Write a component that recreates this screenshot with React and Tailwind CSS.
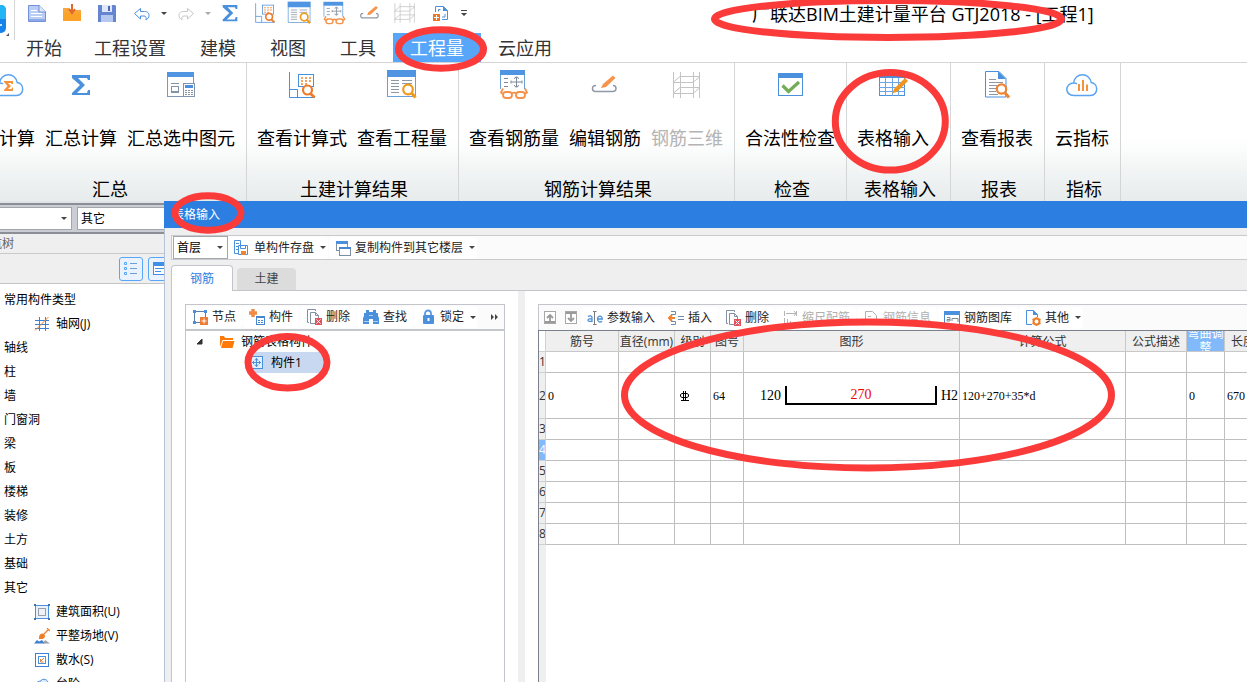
import React from "react";

const BLUE = "#4a90dc";
const ORANGE = "#f08230";

function Svg({ size = 32, box = 32, children }) {
  return (
    <svg width={size} height={size} viewBox={`0 0 ${box} ${box}`} fill="none" className="shrink-0" aria-hidden="true">
      {children}
    </svg>
  );
}

/* ---------- ribbon icons, 32 unit grid ---------- */

const SigmaIcon = ({ size }) => (
  <Svg size={size}>
    <path d="M7 6h18v5h-2l-1-2H13l7 7-8 8h10l1-3h2v5H7v-2l8-8-8-7z" fill={BLUE} />
  </Svg>
);

const CLOUD = "M8 26.500C3 26.500 .8 23.500.8 20.300S3.500 14 7.500 14C8 9 12 5.800 16.500 5.800S24.500 9 25.200 13.500C28.500 14 30.700 16.800 30.700 20S28.500 26.500 24.500 26.500zM7.500 14C9 13.800 10 14.200 11 15M11 11.200";

const CloudSigmaIcon = () => (
  <Svg>
    <path d={CLOUD} stroke="#5aa3f0" strokeWidth="1.500" />
    <path d="M12 12h9v3h-1.500l-.5-1h-3l3 3-3 3h3.500l.5-1.500H21V22h-9v-1l3.500-4L12 13z" fill="#f5923e" />
  </Svg>
);

const CloudChartIcon = () => (
  <Svg>
    <path d={CLOUD} stroke="#5aa3f0" strokeWidth="1.500" />
    <path d="M13 15v7M17 11v11M21 15.500V22" stroke="#f5923e" strokeWidth="2" />
  </Svg>
);

const SelectedIcon = () => (
  <Svg>
    <rect x="2.500" y="3.500" width="26" height="24" stroke="#7f97b4" fill="#fff" />
    <rect x="2" y="3" width="27" height="5" fill="#4f95e2" />
    <path d="M6 14.500h8M6 23.500h8" stroke="#8494a8" />
    <rect x="6.500" y="17.500" width="7" height="5" stroke="#8494a8" />
    <rect x="18.500" y="14.500" width="11" height="13" stroke="#8494a8" fill="#fff" />
    <rect x="20" y="16" width="8" height="3" fill={BLUE} />
    <path d="M20 21.500h8M20 23.500h8M20 25.500h8" stroke="#8494a8" strokeDasharray="2 1" />
  </Svg>
);

const FormulaIcon = ({ size }) => (
  <Svg size={size}>
    <path d="M3.500 3v25.500H29M3.500 20.500h8v8" stroke={BLUE} />
    <rect x="12.500" y="5.500" width="15" height="12" stroke={BLUE} fill="#fff" />
    <path d="M15 9h10M15 12h10M15 15h6" stroke={ORANGE} strokeWidth="1.500" strokeDasharray="2 2" />
    <circle cx="21.500" cy="21" r="4.500" stroke="#ee7b2b" strokeWidth="2.200" fill="#fff" />
    <path d="M24.500 24.500l4 4" stroke="#ee7b2b" strokeWidth="2.800" />
  </Svg>
);

const QuantityIcon = ({ size }) => (
  <Svg size={size}>
    <rect x="1.500" y="1.500" width="28" height="26" stroke="#6b9fd8" fill="#fff" />
    <rect x="1" y="1" width="29" height="7" fill="#4f95e2" />
    <path d="M5 11.500h8M5 14.500h8M5 17.500h8M5 20.500h8M5 23.500h8M16 11.500h10M16 14.500h10" stroke="#8d98a6" />
    <circle cx="22" cy="20.500" r="4.800" stroke="#f09a1c" strokeWidth="2.200" fill="#fff" />
    <path d="M25.500 24l4 4.500" stroke="#f09a1c" strokeWidth="3" />
  </Svg>
);

const GlassesIcon = ({ size }) => (
  <Svg size={size}>
    <path d="M2.500 20V2h24v18" stroke="#6b9fd8" fill="#fff" />
    <rect x="2" y="1" width="25" height="5" fill="#4f95e2" />
    <path d="M6 9.500h4M6 13.500h4M6 17.500h4M18.500 8v10M13 13h11M13 11.500v3M24 11.500v3M16.500 10a2 2 0 014 0M16.500 16a2 2 0 004 0" stroke="#7c8a99" />
    <g stroke="#f5924a" strokeWidth="1.800" fill="#fff">
      <rect x="5" y="23" width="9" height="6" rx="3" />
      <rect x="18" y="23" width="9" height="6" rx="3" />
      <path d="M14 24.500c1-1 3-1 4 0M5 25l-2-1.500 2-4M27 25l2-1.500-2-4" fill="none" />
    </g>
  </Svg>
);

const PenIcon = ({ size }) => (
  <Svg size={size}>
    <path d="M7 16.500C4.500 16.500 3.500 18 3.500 19.500s1 3 3 3h17c2 0 3.500-1 3.500-3s-1-3-3-3" stroke="#8f9aa6" strokeWidth="1.500" />
    <path d="M12 19l2-4L24 6.500l2.500 2.500L17 18z" fill="#f5944a" />
  </Svg>
);

const Grid3dIcon = ({ size }) => (
  <Svg size={size}>
    <path d="M2.500 3v26M9.500 3v26M22.500 3v26M28.500 3v26M2 13.500h20M2 24.500h20M9 7.500h20M9 18.500h20M2 13.500l7-6M22 13.500l7-6M2 24.500l7-6M22 24.500l7-6" stroke="#c4c4c4" />
  </Svg>
);

const CheckIcon = () => (
  <Svg>
    <rect x="4.500" y="4.500" width="24" height="22" stroke={BLUE} fill="#fff" />
    <rect x="4" y="4" width="25" height="5" fill={BLUE} />
    <path d="M8.500 16.500l6 6 10.500-9.500" stroke="#74ad58" strokeWidth="3.200" />
  </Svg>
);

const TableInputIcon = () => (
  <Svg>
    <rect x="2.500" y="5.500" width="25" height="21" stroke={BLUE} />
    <path d="M2 6h26v3H2z" fill={BLUE} />
    <path d="M2 13.500h26M2 18.500h26M2 22.500h26M8.500 9v18M15.500 9v18M21.500 9v18" stroke="#6aa5e8" />
    <path d="M15 24.500l2.500-5L28 9l3 3-10.500 10.500z" fill="#f0961f" />
  </Svg>
);

const ReportIcon = () => (
  <Svg>
    <path d="M4.500 2.500H18l7 7v18.500H4.500z" stroke={BLUE} fill="#fff" />
    <path d="M17 2l8 8h-8z" fill={BLUE} />
    <path d="M8 10.500h7M8 13.500h14M8 16.500h8M8 19.500h7M8 22.500h7M8 25.500h9" stroke="#8d98a6" />
    <circle cx="20.500" cy="20" r="4.700" stroke={ORANGE} strokeWidth="2.200" fill="#fff" />
    <path d="M24 24l4 4.500" stroke={ORANGE} strokeWidth="3" />
  </Svg>
);

/* ---------- quick access icons, 24 unit grid ---------- */

const NewDoc = () => (
  <Svg size={24} box={24}>
    <path d="M3.500 4.500h11l6 6v10h-17z" fill="#b9cdf5" stroke="#7391d8" />
    <path d="M14 4v7h7" fill="#dfe8fb" stroke="#7391d8" />
    <path d="M6 9.500h6M6 12.500h11M6 15.500h11" stroke="#fff" />
    <path d="M4 18h16v2H4z" fill="#8fa9e8" />
  </Svg>
);
const OpenDoc = () => (
  <Svg size={24} box={24}>
    <path d="M3 7h6l2 2h10v11H3z" fill="#f9a63a" />
    <path d="M3 12h18v8H3z" fill="#fba228" />
    <path d="M12 3v7M9 8l3 4 3-4" stroke="#e2682a" strokeWidth="2" />
  </Svg>
);
const SaveDoc = () => (
  <Svg size={24} box={24}>
    <path d="M3 4h17l1 1v16H3z" fill="#6585d0" />
    <rect x="7" y="4" width="10" height="7" fill="#dfe7f8" />
    <rect x="13" y="5" width="2" height="5" fill="#4b69b5" />
    <rect x="6" y="14" width="12" height="7" fill="#b7c8f0" />
  </Svg>
);
const Arrow = ({ color, flip }) => (
  <Svg size={24} box={24}>
    <g transform={flip ? "translate(24 0) scale(-1 1)" : undefined}>
      <path d="M4.500 12.500l6-5v3h4c3.500 0 4.500 2 4.500 4s-1 3-3 4.500c.5-2.500 0-4-2-4h-3.500v3z" stroke={color} fill="#fff" />
    </g>
  </Svg>
);
const NewPage = () => (
  <Svg size={24} box={24}>
    <path d="M7.500 11V5.500h8l4 4v9H14" stroke={BLUE} />
    <path d="M15 5v5h5z" fill={BLUE} />
    <path d="M10.500 10.500v-2h2M17 13v3h-3" stroke={BLUE} />
    <rect x="5" y="13" width="7" height="7" fill="#ee7528" />
    <path d="M8.500 14v5M6 16.500h5" stroke="#fff" />
  </Svg>
);
const Caret = ({ color = "#444", bar }) => (
  <svg width="6" height={bar ? 7 : 3} viewBox={bar ? "0 0 6 7" : "0 0 6 3"} className="shrink-0" aria-hidden="true">
    {bar ? <path d="M0 0h6v1H0zM0 3h6L3 6z" fill={color} /> : <path d="M0 0h6L3 3z" fill={color} />}
  </svg>
);

/* ---------- small icons, 16 unit grid ---------- */

const S = ({ children }) => <Svg size={16} box={16}>{children}</Svg>;

const NodeIcon = () => (
  <S>
    <path d="M2.500 2.500h11v11h-11z" stroke="#5c7fa8" />
    <path d="M1 1h3v3H1zM12 1h3v3h-3zM1 12h3v3H1z" fill={BLUE} />
    <rect x="8" y="8" width="8" height="8" fill="#ee7b35" />
    <path d="M12 9.500v5M9.500 12h5" stroke="#fff" />
  </S>
);
const PartIcon = () => (
  <S>
    <path d="M4 0v8M0 4h8" stroke="#f08b45" strokeWidth="3.500" />
    <rect x="7.500" y="7.500" width="8" height="8" stroke="#4787d0" fill="#fff" />
    <path d="M7 7h9v2H7z" fill="#4787d0" />
    <path d="M9 11.500h5M9 13.500h5" stroke="#4787d0" strokeDasharray="2 1" />
  </S>
);
const DeleteIcon = () => (
  <S>
    <path d="M3 13.500H1.500V.5h8V2" stroke="#8191a2" />
    <path d="M9 14.500H4.500v-11h5l3 3V9M9.500 3.500v3h3" stroke="#8191a2" />
    <rect x="9" y="9" width="7" height="7" fill="#e0525c" />
    <path d="M10.500 10.500l4 4M14.500 10.500l-4 4" stroke="#fff" />
  </S>
);
const FindIcon = () => (
  <S>
    <path d="M3 1h3v2h4V1h3v3h2v3l1 2v6h-6v-5H6v5H0V9l1-2V4h2z" fill="#4a90dc" />
    <path d="M1 12.500h5M10 12.500h5M6 6.500h4" stroke="#a9cdf5" />
  </S>
);
const LockIcon = () => (
  <S>
    <path d="M5 7V4.500a3 3 0 016 0V7" stroke="#5b9ae0" strokeWidth="1.800" />
    <rect x="3" y="6" width="11" height="9" rx="1" fill="#4a90dc" />
    <path d="M8.500 9v3" stroke="#fff" strokeWidth="2" />
  </S>
);
const ParamIcon = () => (
  <S>
    <path d="M1 6.500c1.500-1.200 4-.8 4 1V12M5 9C3 8.500 1 9 1 10.300S4 12 5 10.500M10.500 9h4.800c0-3.800-4.800-3.800-4.800 0s3.200 3.300 4.600 2.200" stroke={BLUE} strokeWidth="1.300" />
    <path d="M6 1.500h1.500v13H6M9.500 1.500H7.500M9.500 14.500H7.500" stroke="#777" />
  </S>
);
const InsertIcon = () => (
  <S>
    <path d="M3 1.500h4.500v3H3M3 11.500h4.500v3H3M10 6.500h6M10 9.500h6" stroke="#6e8cb0" />
    <path d="M7 8H1M4 5L1 8l3 3" stroke={ORANGE} strokeWidth="2" />
  </S>
);
const MoveIcon = ({ down }) => (
  <S>
    <rect x="2.500" y="1.500" width="11" height="12" stroke="#a8a8a8" fill="#fff" />
    <path d={down ? "M8 4v7M5 8l3 3 3-3M3 3h10" : "M8 11V5M5 8l3-3 3 3M3 12h10"} stroke="#9a9a9a" strokeWidth="1.800" />
  </S>
);
const ScaleIcon = () => (
  <S>
    <path d="M2.500 1v5M4 3.500h10M12 1l2 2.500L12 6M14.500 1v5M2.500 8v6M5.500 9v5M8.500 11v3M11.500 12v2" stroke="#b5b5b5" />
  </S>
);
const InfoIcon = () => (
  <S>
    <path d="M2.500 1.500h7l4 4v9h-11z" stroke="#b0b0b0" />
    <path d="M5 6.500h3M5 9.500h6M5 11.500h6" stroke="#b0b0b0" />
  </S>
);
const LibraryIcon = () => (
  <S>
    <rect x=".5" y="1.500" width="15" height="13" stroke="#4787d0" fill="#fff" />
    <path d="M0 1h16v4H0z" fill="#4a90dc" />
    <path d="M3 7.500h3V11H3V9.500h3M8 11V8.500h6V12" stroke="#7c8a99" />
  </S>
);
const OtherIcon = () => (
  <S>
    <path d="M7 14.500H1.500V.5h7l4 4V7" stroke={BLUE} />
    <path d="M8 0v5h5z" fill={BLUE} />
    <circle cx="11.500" cy="11.500" r="3" stroke="#ef7d28" strokeWidth="2" />
    <path d="M11.500 7v2M11.500 14v2M7.500 9.200l2 1M13.500 12.800l2 1M7.500 13.800l2-1M13.500 10.200l2-1" stroke="#ef7d28" strokeWidth="1.500" />
  </S>
);
const StoreIcon = () => (
  <S>
    <path d="M4 13.500H.5V.5h6V5M2 3.500h3M2 6.500h2M2 9.500h2" stroke={BLUE} />
    <path d="M4.500 5.500h9v9h-9z" stroke={BLUE} fill="#fff" />
    <path d="M6.500 5.500h5v3h-5z" stroke={BLUE} />
    <path d="M7 11h5v4H7z" fill={ORANGE} />
  </S>
);
const CopyIcon = () => (
  <S>
    <rect x="1.500" y="1.500" width="11" height="9" stroke="#7d90a8" fill="#fff" />
    <path d="M1 1h12v3H1z" fill="#4a90dc" />
    <rect x="4.500" y="7.500" width="11" height="8" stroke="#7d90a8" fill="#fff" />
    <path d="M4 7h12v2H4z" fill="#4787d0" />
  </S>
);
const AxisIcon = () => (
  <S>
    <path d="M5.500 1v14M11.500 1v14M1 4.500h14M1 8.500h14M1 12.500h14" stroke="#3f7fd0" />
    <path d="M1 14.500L14.500 1" stroke={ORANGE} />
  </S>
);
const AreaIcon = () => (
  <S>
    <path d="M1.500 1.500h13v13h-13z" stroke="#4a90dc" fill="#e9f1fb" />
    <path d="M0 0h2v2H0zM14 0h2v2h-2zM0 14h2v2H0zM14 14h2v2h-2z" fill="#3d72b5" />
    <rect x="4.500" y="4.500" width="7" height="7" stroke="#9a9fa6" fill="#eef2f8" />
  </S>
);
const GroundIcon = () => (
  <S>
    <path d="M0 15.500l3-3.500 2 1.500 3-1.500 3 3.500z" fill="#3f7fd0" />
    <path d="M9 15.500l2-3.500 5 3.500z" fill="#9ba0a6" />
    <path d="M9 7l5.500-5.500M13 0l3 3" stroke="#ef7d28" strokeWidth="1.200" />
    <path d="M5 10c0-3 1-4.500 4-4.500l2 2c0 3-2 4-6 3.500z" fill="#ef7d28" />
  </S>
);
const WaterIcon = () => (
  <S>
    <rect x="1.500" y="1.500" width="13" height="13" stroke="#3f7fd0" />
    <rect x="4.500" y="4.500" width="7" height="7" stroke="#4a90dc" />
    <path d="M10 6L6.500 9.500M6.500 7v3h3" stroke={ORANGE} />
  </S>
);
const StepIcon = () => (
  <S>
    <path d="M1 9c1-3 4-4 6-4 0-2 5-3 7 1l-2 6H3z" stroke="#4a90dc" fill="#dfecfb" />
  </S>
);
const FolderIcon = () => (
  <S>
    <path d="M1 2h4l1 2h8v2H3.500L1 13z" fill="#ff7a08" />
    <path d="M4 7h11.500l-2 7H2z" fill="#ff7a08" />
  </S>
);
const ElementIcon = () => (
  <S>
    <rect x="1.500" y="1.500" width="12" height="12" stroke="#4a90dc" fill="#e2eefb" />
    <path d="M7.500 3v9M3 7.500h9M4.500 6v3M10.500 6v3M6 5.500a1.500 1.500 0 013 0M6 9.500a1.500 1.500 0 003 0" stroke="#4a90dc" />
  </S>
);

/* ---------- data ---------- */

const tabs = ["开始", "工程设置", "建模", "视图", "工具", "工程量", "云应用"];

const groups = [
  { name: "汇总", cls: "-ml-[29px]", items: [["云计算", CloudSigmaIcon], ["汇总计算", SigmaIcon], ["汇总选中图元", SelectedIcon]] },
  { name: "土建计算结果", items: [["查看计算式", FormulaIcon], ["查看工程量", QuantityIcon]] },
  { name: "钢筋计算结果", items: [["查看钢筋量", GlassesIcon], ["编辑钢筋", PenIcon], ["钢筋三维", Grid3dIcon, true]] },
  { name: "检查", items: [["合法性检查", CheckIcon]] },
  { name: "表格输入", items: [["表格输入", TableInputIcon]] },
  { name: "报表", items: [["查看报表", ReportIcon]] },
  { name: "指标", items: [["云指标", CloudChartIcon]] },
];

const navTree = [
  ["常用构件类型"], ["轴网(J)", AxisIcon], ["轴线"], ["柱"], ["墙"], ["门窗洞"], ["梁"], ["板"], ["楼梯"], ["装修"],
  ["土方"], ["基础"], ["其它"], ["建筑面积(U)", AreaIcon], ["平整场地(V)", GroundIcon], ["散水(S)", WaterIcon], ["台阶", StepIcon],
];

const columns = ["筋号", "直径(mm)", "级别", "图号", "图形", "计算公式", "公式描述", "弯曲调整", "长度"];

/* ---------- parts ---------- */

function QuickButton({ label, children }) {
  return (
    <button type="button" aria-label={label} className="flex h-[26px] w-[35px] items-center justify-center">
      {children}
    </button>
  );
}

function CaretButton({ label, color }) {
  return (
    <button type="button" aria-label={label} className="flex h-[26px] w-[9px] items-center justify-center">
      <Caret color={color} />
    </button>
  );
}

function ToolButton({ icon: Icon, text, disabled, caret }) {
  return (
    <button
      type="button"
      disabled={disabled}
      className={
        "mr-px flex h-[22px] shrink-0 items-center gap-1 rounded-sm bg-white pl-[6px] text-[#222] disabled:text-[#b0b0b0] " +
        (caret ? "pr-[2px]" : "pr-[6px]")
      }
    >
      <Icon />
      <span className="whitespace-nowrap">{text}</span>
      {caret && <span className="pl-[2px]"><Caret /></span>}
    </button>
  );
}

function Combo({ label, value, className }) {
  return (
    <label className={"relative flex shrink-0 items-center border border-[#a3a6ab] bg-white " + className}>
      <span className="sr-only">{label}</span>
      <select defaultValue={value} className="h-full w-full appearance-none pl-[3px] text-[12px] text-black outline-none">
        <option value={value}>{value}</option>
      </select>
      <span className="pointer-events-none absolute right-1"><Caret /></span>
    </label>
  );
}

function Header() {
  return (
    <header className="flex border-b border-[#d4d4d4] bg-white">
      <div className="flex h-10 w-[15px] shrink-0 items-end overflow-hidden border-r border-[#d5d5d5]">
        <svg width="14" height="40" viewBox="0 0 14 40" aria-hidden="true">
          <rect x="-22" y="5" width="28" height="28" rx="5" fill="#1583ea" />
          <path d="M-5 5h6a5 5 0 015 5v9H-5z" fill="#22b4f4" />
          <path d="M0 24h2v2H0z" fill="#bfe6fc" />
          <path d="M9 33v3H6z" fill="#555" />
        </svg>
      </div>
      <div className="min-w-0 flex-1">
        <div className="flex h-[33px] items-start overflow-hidden whitespace-nowrap pl-1">
          <QuickButton label="新建"><NewDoc /></QuickButton>
          <QuickButton label="打开"><OpenDoc /></QuickButton>
          <QuickButton label="保存"><SaveDoc /></QuickButton>
          <QuickButton label="撤销"><Arrow color="#4a90dc" /></QuickButton>
          <CaretButton label="撤销列表" />
          <QuickButton label="恢复"><Arrow color="#c6c6c6" flip /></QuickButton>
          <CaretButton label="恢复列表" color="#aaa" />
          <QuickButton label="汇总计算"><SigmaIcon size={26} /></QuickButton>
          <QuickButton label="查看计算式"><FormulaIcon size={24} /></QuickButton>
          <QuickButton label="查看工程量"><QuantityIcon size={25} /></QuickButton>
          <QuickButton label="查看钢筋量"><GlassesIcon size={25} /></QuickButton>
          <QuickButton label="编辑钢筋"><PenIcon size={24} /></QuickButton>
          <QuickButton label="钢筋三维"><Grid3dIcon size={24} /></QuickButton>
          <QuickButton label="新建构件"><NewPage /></QuickButton>
          <button type="button" aria-label="自定义" className="flex h-[26px] w-[14px] items-center justify-center"><Caret bar /></button>
          <h1 className="ml-[281px] text-[18px] leading-7 text-black">广联达BIM土建计量平台 GTJ2018 - [工程1]</h1>
        </div>
        <nav className="flex overflow-hidden">
          {tabs.map((t) => (
            <button
              key={t}
              type="button"
              className={
                "h-[29px] shrink-0 px-[17px] text-[18px] leading-[31px] first:pl-[11px] first:pr-[15px] " +
                (t === "工程量" ? "bg-[#58a6fa] text-white" : "text-[#333]")
              }
            >
              {t}
            </button>
          ))}
        </nav>
      </div>
    </header>
  );
}

function Ribbon() {
  return (
    <div className="flex h-[138px] shrink-0 overflow-hidden bg-linear-to-b from-white from-55% to-[#e6ebeb]">
      {groups.map((g) => (
        <section key={g.name} className={"flex shrink-0 flex-col justify-between border-r border-[#d3d5d6] pt-[6px] " + (g.cls || "")}>
          <div className="flex pl-[5px] pr-[6px]">
            {g.items.map(([text, Icon, disabled]) => (
              <button
                key={text}
                type="button"
                disabled={disabled}
                className="flex flex-col items-center gap-[25px] px-[5px] text-[18px] leading-6 text-black disabled:text-[#b4b4b4]"
              >
                <Icon />
                <span>{text}</span>
              </button>
            ))}
          </div>
          <h2 className="pl-[17px] pr-[14px] text-center text-[18px] leading-6 text-black">{g.name}</h2>
        </section>
      ))}
    </div>
  );
}

function Sidebar() {
  return (
    <aside className="flex w-[164px] shrink-0 flex-col overflow-hidden bg-white text-[12px] text-black">
      <div className="h-[2px] shrink-0 bg-[#e1e4e8]" />
      <div className="flex h-[31px] shrink-0 items-center gap-[5px] border-y-2 border-[#8b8e95] bg-[#cacdd4]">
        <Combo label="楼层" value="" className="h-[23px] w-[72px] border-l-0" />
        <Combo label="构件类型" value="其它" className="h-[23px] w-[120px]" />
      </div>
      <div className="h-5 shrink-0 border-b border-[#c9c9c9] bg-[#efefef]">
        <h2 className="-ml-[10px] leading-[19px] text-[#666]">航树</h2>
      </div>
      <div className="flex h-[30px] shrink-0 items-center gap-[5px] border-b border-[#c4c4c4] bg-[#efefef] pl-[119px]">
        <button type="button" aria-label="列表" className="flex size-6 shrink-0 items-center justify-center rounded-[3px] border border-[#58a6f8] bg-[#eaf3fd]">
          <S><path d="M1.500 1.500h2v2h-2zM1.500 6.500h2v2h-2zM1.500 11.500h2v2h-2z" stroke="#58a6f8" /><path d="M7 2.500h7M7 7.500h7M7 12.500h7" stroke="#6d9fd6" /></S>
        </button>
        <button type="button" aria-label="面板" className="flex size-6 shrink-0 items-center justify-center rounded-[3px] border border-[#58a6f8] bg-[#eaf3fd]">
          <S><rect x="1.500" y="1.500" width="14" height="12" stroke="#3f8fe8" fill="#fff" /><path d="M1 1h15v4H1z" fill="#3f8fe8" /><path d="M3 7.500h9M3 10.500h6" stroke="#3f8fe8" /></S>
        </button>
      </div>
      <ul className="pt-1">
        {navTree.map(([text, Icon]) => (
          <li key={text} className={"flex h-6 items-center gap-[6px] whitespace-nowrap " + (Icon ? "pl-[34px]" : "pl-1")}>
            {Icon && <Icon />}
            <span>{text}</span>
          </li>
        ))}
      </ul>
    </aside>
  );
}

function Shape() {
  return (
    <div className="flex items-center gap-1 pl-[14px] text-[14px]">
      <span>120</span>
      <span className="flex h-[19px] w-[152px] items-center justify-center border-2 border-t-0 border-black text-[#f00000]">270</span>
      <span>H2</span>
    </div>
  );
}

function Rebar() {
  return (
    <svg width="10" height="10" viewBox="0 0 10 10" className="ml-[3px]" fill="none" stroke="#000" role="img" aria-label="钢筋级别">
      <path d="M3.500 0v9M5.500 0v9M2 2.500h5l1.500 1v2l-1.500 1H2l-1.500-1v-2zM1 9.500h8" />
    </svg>
  );
}

function GridTable() {
  const cell = "border-r border-b border-[#bfbfbf] p-0 pl-[2px] text-left font-normal";
  const row2 = ["0", "", <Rebar />, "64", <Shape />, "120+270+35*d", "", "0", "670"];
  return (
    <div className="flex-1 overflow-hidden border-l border-t border-[#7b818c] bg-linear-to-r from-[#efefef] from-[7px] to-white to-[7px]">
      <table className="w-[746px] table-fixed border-separate border-spacing-0 bg-white text-[12px]">
        <colgroup>
          <col className="w-[7px]" />
          <col className="w-[73px]" />
          <col className="w-[56px]" />
          <col className="w-[36px]" />
          <col className="w-[33px]" />
          <col className="w-[216px]" />
          <col className="w-[166px]" />
          <col className="w-[61px]" />
          <col className="w-[38px]" />
          <col className="w-[60px]" />
        </colgroup>
        <thead>
          <tr>
            <td className="h-[21px] border-r border-b border-[#d0d0d0] bg-white p-0" />
            {columns.map((c) => (
              <th
                key={c}
                scope="col"
                className={"h-[21px] border-r border-b border-[#c8c8c8] p-0 font-normal " + (c === "弯曲调整" ? "bg-[#82b9fa] text-white" : "bg-[#efefef] text-[#333]")}
              >
                {c === "弯曲调整" ? (
                  <div className="flex h-5 items-center overflow-hidden leading-[14px]">{c}</div>
                ) : (
                  <div className={"h-5 leading-[21px] whitespace-nowrap " + (c === "长度" ? "pl-[6px] text-left" : "")}>{c}</div>
                )}
              </th>
            ))}
          </tr>
        </thead>
        <tbody>
          {[1, 2, 3, 4, 5, 6, 7, 8].map((n) => (
            <tr key={n} className={n === 2 ? "h-[46px]" : "h-[21px]"}>
              <th
                scope="row"
                className={"overflow-hidden border-r border-b border-[#d0d0d0] p-0 text-left font-normal leading-5 " + (n === 4 ? "bg-[#82b9fa] text-white" : "bg-[#efefef] text-[#333]")}
              >
                {n}
              </th>
              {columns.map((c, i) => (
                <td key={c} className={cell + " font-['Liberation_Serif','Noto_Sans_CJK_SC',serif]"}>
                  {n === 2 ? row2[i] : null}
                </td>
              ))}
            </tr>
          ))}
        </tbody>
      </table>
    </div>
  );
}

function Dialog() {
  return (
    <section className="flex min-w-0 flex-1 flex-col border-l border-[#b6c3d8] bg-[#efefef] text-[12px]">
      <h2 className="-ml-px h-[27px] shrink-0 bg-[#2c7ee0] pl-2 leading-7 text-white">表格输入</h2>
      <div className="ml-[6px] mt-[7px] flex h-[25px] shrink-0 items-center border border-r-0 border-[#c8cace] bg-[#fbfbfb] pl-px">
        <Combo label="楼层" value="首层" className="h-[23px] w-[55px]" />
        <ToolButton icon={StoreIcon} text="单构件存盘" caret />
        <ToolButton icon={CopyIcon} text="复制构件到其它楼层" caret />
      </div>
      <div role="tablist" className="ml-[6px] mt-[5px] flex h-[25px] shrink-0 items-end gap-1">
        <button role="tab" aria-selected="true" type="button" className="relative -mb-px h-[26px] w-[62px] rounded-t border border-b-0 border-[#c3c5ca] bg-white text-[#2c7ee0]">钢筋</button>
        <button role="tab" aria-selected="false" type="button" className="h-[22px] w-[59px] rounded-t bg-[#dcdcdc] text-[#444]">土建</button>
      </div>
      <div className="ml-[6px] flex min-h-0 flex-1 border-l border-t border-[#c3c5ca] bg-white">
        <div className="ml-[13px] mr-[13px] mt-[13px] flex w-[320px] shrink-0 flex-col border border-b-0 border-[#c3c5ca]">
          <div className="flex h-[26px] shrink-0 items-center border-b-2 border-[#c3c7cc] bg-[#fbfbfb]">
            <ToolButton icon={NodeIcon} text="节点" />
            <ToolButton icon={PartIcon} text="构件" />
            <ToolButton icon={DeleteIcon} text="删除" />
            <ToolButton icon={FindIcon} text="查找" />
            <ToolButton icon={LockIcon} text="锁定" caret />
            <button type="button" aria-label="更多" className="ml-2 flex h-[22px] w-4 items-center justify-center">
              <svg width="8" height="6" viewBox="0 0 8 6" aria-hidden="true"><path d="M0 0l3 3-3 3zM4 0l3 3-3 3z" fill="#444" /></svg>
            </button>
          </div>
          <ul className="text-black">
            <li className="flex h-[21px] items-center pl-[10px]">
              <svg width="7" height="7" viewBox="0 0 7 7" aria-hidden="true"><path d="M6 1v5H1z" fill="#333" stroke="#333" /></svg>
              <span className="ml-4 flex items-center gap-[6px]"><FolderIcon />钢筋表格构件</span>
            </li>
            <li className="ml-[62px] flex h-[21px] w-[75px] items-center gap-[6px] bg-[#c8d8f0] pl-px"><ElementIcon />构件1</li>
          </ul>
        </div>
        <div className="w-[7px] shrink-0 bg-[#efefef]" />
        <div className="ml-[13px] mt-[13px] flex min-w-0 flex-1 flex-col overflow-hidden">
          <div className="flex h-[26px] shrink-0 items-center border-l border-t border-[#c3c5ca] bg-[#fbfbfb] pl-[3px]">
            <button type="button" aria-label="上移" className="mr-[5px] shrink-0"><MoveIcon /></button>
            <button type="button" aria-label="下移" className="mr-[2px] shrink-0"><MoveIcon down /></button>
            <ToolButton icon={ParamIcon} text="参数输入" />
            <ToolButton icon={InsertIcon} text="插入" />
            <ToolButton icon={DeleteIcon} text="删除" />
            <ToolButton icon={ScaleIcon} text="缩尺配筋" disabled />
            <ToolButton icon={InfoIcon} text="钢筋信息" disabled />
            <ToolButton icon={LibraryIcon} text="钢筋图库" />
            <ToolButton icon={OtherIcon} text="其他" caret />
          </div>
          <GridTable />
        </div>
      </div>
    </section>
  );
}

/* Hand-drawn style callouts floating over the window */
function Callouts() {
  return (
    <svg width="1247" height="682" viewBox="0 0 1247 682" fill="none" stroke="#fb3a3a" strokeWidth="7" className="pointer-events-none absolute left-0 top-0 max-w-none" aria-hidden="true">
      <ellipse cx="888" cy="19" rx="173.500" ry="18.500" />
      <ellipse cx="441" cy="49" rx="42.500" ry="19.300" />
      <ellipse cx="890.300" cy="121.300" rx="55" ry="48.800" />
      <ellipse cx="208" cy="213" rx="33" ry="17.300" />
      <ellipse cx="287.500" cy="362.300" rx="39.500" ry="25.800" />
      <ellipse cx="868" cy="395" rx="243.500" ry="73" />
    </svg>
  );
}

export default function App() {
  return (
    <div className="relative flex h-screen flex-col overflow-hidden bg-white font-['Open_Sans','Noto_Sans_CJK_SC',sans-serif]">
      <Header />
      <Ribbon />
      <main className="flex min-h-0 flex-1">
        <Sidebar />
        <Dialog />
      </main>
      <Callouts />
    </div>
  );
}
